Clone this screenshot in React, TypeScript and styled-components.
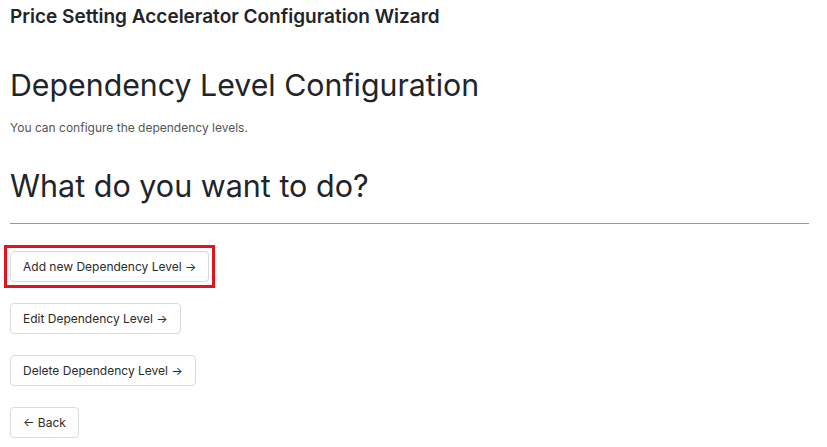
import React from "react";
import styled, { createGlobalStyle } from "styled-components";

const Global = createGlobalStyle`
  html, body { margin: 0; padding: 0; background: #fff; }
  body { font-family: Inter, "Noto Sans", sans-serif; color: #212529; }
  * { box-sizing: border-box; }
`;

const Page = styled.div`
  padding: 0 10px;
  display: flex;
  flex-direction: column;
`;

const AppTitle = styled.div`
  font-size: 19px;
  font-weight: 600;
  line-height: 24px;
  margin-top: 5px;
  color: #212529;
`;

const PageHeading = styled.h1`
  font-size: 30.3px;
  font-weight: 400;
  line-height: 36px;
  margin: 38px 0 0;
  color: #212529;
`;

const Lead = styled.p`
  font-size: 12px;
  line-height: 16px;
  margin: 17px 0 0;
  color: #555;
`;

const Question = styled.h2`
  font-size: 30.5px;
  font-weight: 400;
  line-height: 36px;
  margin: 32px 0 0;
  color: #212529;
`;

const Rule = styled.hr`
  border: 0;
  border-top: 1px solid #999;
  margin: 19px 0 0;
  width: 799px;
`;

const Actions = styled.div`
  display: flex;
  flex-direction: column;
  align-items: flex-start;
  gap: 21px;
  margin-top: 27px;
`;

const Highlight = styled.div`
  display: inline-flex;
  border: 3px solid #e3121f;
  padding: 3px;
  margin: -6px;
`;

const ActionButton = styled.button`
  font-family: Inter, "Noto Sans", sans-serif;
  font-size: 12px;
  line-height: 16px;
  color: #2b2b2b;
  background: #fff;
  border: 1px solid #dadada;
  border-radius: 4px;
  padding: 0 12px;
  height: 31px;
  cursor: pointer;
`;

export default function App() {
  return (
    <>
      <Global />
      <Page>
        <AppTitle>Price Setting Accelerator Configuration Wizard</AppTitle>
        <PageHeading>Dependency Level Configuration</PageHeading>
        <Lead>You can configure the dependency levels.</Lead>
        <Question>What do you want to do?</Question>
        <Rule />
        <Actions>
          <Highlight>
            <ActionButton>Add new Dependency Level →</ActionButton>
          </Highlight>
          <ActionButton>Edit Dependency Level →</ActionButton>
          <ActionButton>Delete Dependency Level →</ActionButton>
          <ActionButton>← Back</ActionButton>
        </Actions>
      </Page>
    </>
  );
}
